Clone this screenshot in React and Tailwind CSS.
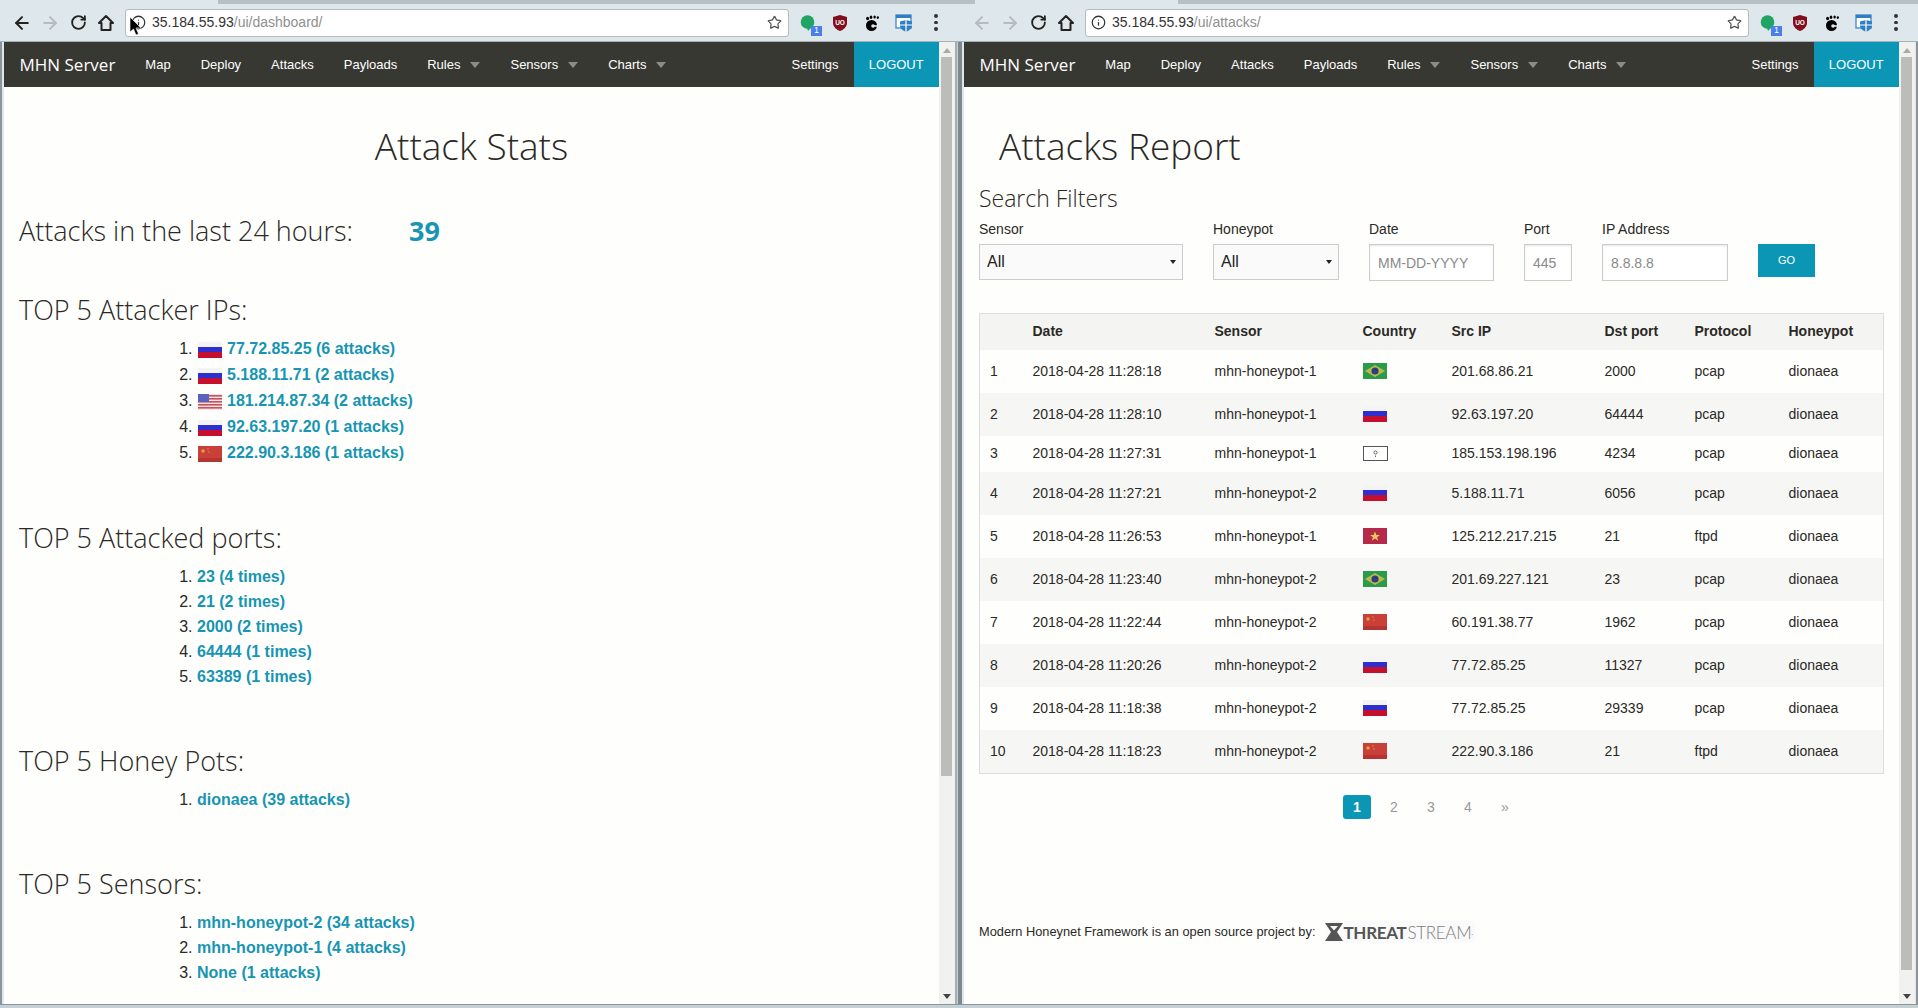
import React from 'react';
import { ArrowLeft, ArrowRight, RotateCw, Star, Info } from 'lucide-react';

const attackerIps = [
  { flag: 'ru', text: '77.72.85.25 (6 attacks)' },
  { flag: 'ru', text: '5.188.11.71 (2 attacks)' },
  { flag: 'us', text: '181.214.87.34 (2 attacks)' },
  { flag: 'ru', text: '92.63.197.20 (1 attacks)' },
  { flag: 'cn', text: '222.90.3.186 (1 attacks)' },
];
const ports = ['23 (4 times)', '21 (2 times)', '2000 (2 times)', '64444 (1 times)', '63389 (1 times)'];
const sensors = ['mhn-honeypot-2 (34 attacks)', 'mhn-honeypot-1 (4 attacks)', 'None (1 attacks)'];

const attacks = [
  { id: 1, date: '2018-04-28 11:28:18', sensor: 'mhn-honeypot-1', flag: 'br', ip: '201.68.86.21', port: '2000', proto: 'pcap' },
  { id: 2, date: '2018-04-28 11:28:10', sensor: 'mhn-honeypot-1', flag: 'ru', ip: '92.63.197.20', port: '64444', proto: 'pcap' },
  { id: 3, date: '2018-04-28 11:27:31', sensor: 'mhn-honeypot-1', flag: 'xx', ip: '185.153.198.196', port: '4234', proto: 'pcap' },
  { id: 4, date: '2018-04-28 11:27:21', sensor: 'mhn-honeypot-2', flag: 'ru', ip: '5.188.11.71', port: '6056', proto: 'pcap' },
  { id: 5, date: '2018-04-28 11:26:53', sensor: 'mhn-honeypot-1', flag: 'vn', ip: '125.212.217.215', port: '21', proto: 'ftpd' },
  { id: 6, date: '2018-04-28 11:23:40', sensor: 'mhn-honeypot-2', flag: 'br', ip: '201.69.227.121', port: '23', proto: 'pcap' },
  { id: 7, date: '2018-04-28 11:22:44', sensor: 'mhn-honeypot-2', flag: 'cn', ip: '60.191.38.77', port: '1962', proto: 'pcap' },
  { id: 8, date: '2018-04-28 11:20:26', sensor: 'mhn-honeypot-2', flag: 'ru', ip: '77.72.85.25', port: '11327', proto: 'pcap' },
  { id: 9, date: '2018-04-28 11:18:38', sensor: 'mhn-honeypot-2', flag: 'ru', ip: '77.72.85.25', port: '29339', proto: 'pcap' },
  { id: 10, date: '2018-04-28 11:18:23', sensor: 'mhn-honeypot-2', flag: 'cn', ip: '222.90.3.186', port: '21', proto: 'ftpd' },
];

const Flag = ({ code, className = 'block' }) => {
  if (code === 'xx') {
    return (
      <svg width="25" height="15" viewBox="0 0 25 15" className={className}>
        <rect x="0.5" y="0.5" width="24" height="14" fill="#fff" stroke="#555" />
        <circle cx="12.5" cy="6.5" r="1.6" fill="none" stroke="#666" />
        <rect x="12" y="9.5" width="1" height="1.5" fill="#666" />
      </svg>
    );
  }
  return (
    <svg width="24" height="16" viewBox="0 0 24 16" className={className}>
      {code === 'ru' && (
        <>
          <rect width="24" height="6" fill="#f4f4f4" />
          <rect y="5" width="24" height="6" fill="#2d2fd0" />
          <rect y="10" width="24" height="6" fill="#c4102c" />
        </>
      )}
      {code === 'us' && (
        <>
          <rect width="24" height="16" fill="#f3e3e3" />
          {[1, 4, 7, 10, 13].map((y) => (
            <rect key={y} y={y} width="24" height="1.6" fill="#c4525f" />
          ))}
          <rect width="11" height="8" fill="#5a62bd" />
        </>
      )}
      {code === 'cn' && (
        <>
          <rect width="24" height="16" fill="#c9403a" />
          <rect y="12" width="24" height="4" fill="#b5342f" />
          <circle cx="5" cy="5" r="1.8" fill="#d9a03c" />
          <circle cx="10" cy="3" r="0.7" fill="#d9a03c" />
          <circle cx="11" cy="6" r="0.7" fill="#d9a03c" />
        </>
      )}
      {code === 'br' && (
        <>
          <rect width="24" height="16" fill="#2b9a4b" />
          <polygon points="12,2 22,8 12,14 2,8" fill="#b9bb4a" />
          <circle cx="12" cy="8" r="3.6" fill="#2b3f7e" />
        </>
      )}
      {code === 'vn' && (
        <>
          <rect width="24" height="16" fill="#b52a48" />
          <polygon points="12,3.5 13.4,7 17,7 14.1,9.2 15.2,12.7 12,10.6 8.8,12.7 9.9,9.2 7,7 10.6,7" fill="#e8c75a" />
        </>
      )}
    </svg>
  );
};

const Caret = () => <span className="ml-[10px] h-0 w-0 border-x-[5px] border-t-[6px] border-x-transparent border-t-[#8c8c88]" />;

const NavBar = () => (
  <div className="flex h-[45px] items-center bg-[#383833] text-[13px] text-white">
    <span className="ml-[15.5px] mr-[30px] font-['Open_Sans',sans-serif] text-[17px]">MHN Server</span>
    <div className="flex items-center gap-[30px]">
      <span>Map</span>
      <span>Deploy</span>
      <span>Attacks</span>
      <span>Payloads</span>
      <span className="flex items-center">Rules<Caret /></span>
      <span className="flex items-center">Sensors<Caret /></span>
      <span className="flex items-center">Charts<Caret /></span>
    </div>
    <span className="ml-auto mr-[15px]">Settings</span>
    <span className="flex h-full w-[85.5px] items-center justify-center bg-[#0b96b5]">LOGOUT</span>
  </div>
);

const Scrollbar = ({ thumb }) => (
  <div className="relative flex w-[16px] flex-col bg-[#f1f1ef]">
    <div className="mx-auto mt-[6px] h-0 w-0 border-x-[4px] border-b-[5px] border-x-transparent border-b-[#a9aaa6]" />
    <div className={`ml-[2px] mt-[4px] w-[11px] bg-[#bcbdb8] ${thumb}`} />
    <div className="mx-auto mb-[5px] mt-auto h-0 w-0 border-x-[4px] border-t-[5px] border-x-transparent border-t-[#444]" />
  </div>
);

const HomeIcon = () => (
  <svg width="18" height="18" viewBox="0 0 18 18" fill="none" stroke="#222" strokeWidth="2">
    <path d="M9 2 L16 9 H13.5 V16 H4.5 V9 H2 Z" strokeLinejoin="round" />
  </svg>
);

const Extensions = () => (
  <>
    <div className="relative flex w-[32px] justify-center">
      <svg width="16" height="18" viewBox="0 0 16 18" className="mt-[2px]">
        <circle cx="7.5" cy="7" r="6.8" fill="#1fa463" />
        <polygon points="7,13 12,12 8,16" fill="#1fa463" />
      </svg>
      <span className="absolute left-[19px] top-[13px] flex h-[10px] w-[11px] items-center justify-center bg-[#4a80e8] text-[9px] leading-none text-white">1</span>
    </div>
    <div className="flex w-[32px] justify-center">
      <svg width="16" height="18" viewBox="0 0 16 18">
        <path d="M8 1 L15 3 V9 C15 13 11 16 8 17 C5 16 1 13 1 9 V3 Z" fill="#800e1c" />
        <text x="8" y="11" textAnchor="middle" fontSize="6.5" fontWeight="700" fill="#fff" fontFamily="Liberation Sans">UO</text>
      </svg>
    </div>
    <div className="flex w-[32px] justify-center">
      <svg width="15" height="18" viewBox="0 0 15 18" fill="#000">
        <ellipse cx="6.5" cy="11.5" rx="5.5" ry="5.5" />
        <circle cx="8" cy="12" r="1.8" fill="#dee7ec" />
        <rect x="8" y="11.2" width="5" height="1.6" fill="#dee7ec" />
        <ellipse cx="2.6" cy="4.5" rx="1.5" ry="1.8" />
        <ellipse cx="6" cy="3.2" rx="1.3" ry="1.7" />
        <ellipse cx="9.6" cy="3" rx="1.2" ry="1.6" />
        <ellipse cx="12.8" cy="3.6" rx="1.1" ry="1.3" />
      </svg>
    </div>
    <div className="flex w-[32px] justify-center">
      <svg width="18" height="18" viewBox="0 0 18 18">
        <rect x="1" y="1" width="15" height="13" fill="#fff" stroke="#2f7fc4" strokeWidth="1.2" />
        <rect x="1" y="1" width="15" height="3" fill="#2f7fc4" />
        <path d="M11 6 L17 7.5 V12 C17 15 13 17 11 18 C9 17 5 15 5 12 V7.5 Z" fill="#2f7fc4" />
        <path d="M11 6 V18 M5 11 H17" stroke="#fff" strokeWidth="1.2" />
      </svg>
    </div>
    <div className="flex w-[32px] flex-col items-center gap-[3px]">
      <span className="h-[3.5px] w-[3.5px] rounded-full bg-[#333]" />
      <span className="h-[3.5px] w-[3.5px] rounded-full bg-[#333]" />
      <span className="h-[3.5px] w-[3.5px] rounded-full bg-[#333]" />
    </div>
  </>
);

const Window = ({ host, path, tab, backColor, secure, thumb, edge, leftEdge, width, children }) => (
  <div className={`flex h-[1008px] shrink-0 flex-col ${width}`}>
    <div className="flex h-[4px] bg-[#b7c1c5]">
      <div className={`h-full bg-[#dee7ec] ${tab}`} />
    </div>
    <div className="relative flex h-[38px] items-center border-b border-[#a7b0b4] bg-[#dee7ec] pl-[8px]">
      <div className="flex w-[28px] justify-center"><ArrowLeft size={20} strokeWidth={2.4} color={backColor} /></div>
      <div className="flex w-[28px] justify-center"><ArrowRight size={20} strokeWidth={2.4} color="#b4bcc0" /></div>
      <div className="flex w-[28px] justify-center"><RotateCw size={17} strokeWidth={2.6} color="#222" /></div>
      <div className="flex w-[28px] justify-center"><HomeIcon /></div>
      <div className="ml-[5px] mr-[3px] flex h-[28px] w-[664px] items-center rounded-[3px] border border-[#b4bcc0] bg-white pl-[5px] pr-[6px] text-[14px]">
        <Info size={15} color="#333" />
        <span className="ml-[6px] text-[#333]">{host}</span>
        <span className="text-[#8f8f8f]">{path}</span>
        <Star size={15} color="#555" className="ml-auto" />
      </div>
      <Extensions />
      {secure}
    </div>
    <div className="flex h-[962px]">
      <div className={leftEdge} />
      <div className="w-[935px] overflow-hidden bg-[#fefefc] text-[#2b2925]">
        <NavBar />
        {children}
      </div>
      <Scrollbar thumb={thumb} />
      <div className={edge} />
    </div>
    <div className="h-[4px] border-t border-[#8c969a] bg-[#c5d0d5]" />
  </div>
);

const SectionHeading = ({ className, children }) => (
  <h2 className={`h-[36px] font-['Open_Sans',sans-serif] text-[27px] font-light leading-[36px] ${className}`}>{children}</h2>
);

const LinkList = ({ items, className }) => (
  <ol className={`list-decimal pl-[178px] text-[16px] ${className}`}>
    {items.map((item) => (
      <li key={item} className="h-[25px] leading-[25px]">
        <span className="font-bold text-[#1795b2]">{item}</span>
      </li>
    ))}
  </ol>
);

const Dashboard = () => (
  <div className="pl-[15px]">
    <h1 className="mt-[34px] pr-[15px] text-center font-['Open_Sans',sans-serif] text-[37px] font-light leading-[50px]">Attack Stats</h1>
    <div className="mt-[42px] flex h-[36px] items-center font-['Open_Sans',sans-serif]">
      <span className="text-[27px] font-light">Attacks in the last 24 hours:</span>
      <span className="ml-[56px] text-[27px] font-bold text-[#1795b2]">39</span>
    </div>
    <SectionHeading className="mt-[43px]">TOP 5 Attacker IPs:</SectionHeading>
    <ol className="mt-[8px] list-decimal pl-[178px] text-[16px]">
      {attackerIps.map((row) => (
        <li key={row.text} className="h-[26px] leading-[26px]">
          <Flag code={row.flag} className="ml-[1px] mr-[5px] inline-block align-[-4px]" />
          <span className="font-bold text-[#1795b2]">{row.text}</span>
        </li>
      ))}
    </ol>
    <SectionHeading className="mt-[54px]">TOP 5 Attacked ports:</SectionHeading>
    <LinkList className="mt-[7.5px]" items={ports} />
    <SectionHeading className="mt-[54.5px]">TOP 5 Honey Pots:</SectionHeading>
    <LinkList className="mt-[7.5px]" items={['dionaea (39 attacks)']} />
    <SectionHeading className="mt-[54.5px]">TOP 5 Sensors:</SectionHeading>
    <LinkList className="mt-[7.5px]" items={sensors} />
  </div>
);

const Field = ({ label, className, children }) => (
  <div className={className}>
    <label className="block h-[18px] text-[14px] leading-[18px]">{label}</label>
    <div className="mt-[6px]">{children}</div>
  </div>
);

const SelectBox = () => (
  <div className="relative h-[36px]">
    <select className="h-full w-full appearance-none border border-[#cccccc] bg-[#fafafa] pl-[7px] text-[16px] text-[#222]">
      <option>All</option>
    </select>
    <span className="absolute right-[7px] top-[16px] h-0 w-0 border-x-[3px] border-t-[4px] border-x-transparent border-t-[#222]" />
  </div>
);

const TextBox = ({ placeholder }) => (
  <input
    placeholder={placeholder}
    className="h-[37px] w-full border border-[#cccccc] bg-white pl-[8px] text-[14px] shadow-[inset_0_1px_2px_rgba(0,0,0,0.1)] placeholder:text-[#8a8a8a]"
  />
);

const Report = () => (
  <div className="pl-[15px]">
    <h1 className="ml-[20px] mt-[34px] font-['Open_Sans',sans-serif] text-[37px] font-light leading-[50px]">Attacks Report</h1>
    <h2 className="mt-[12px] font-['Open_Sans',sans-serif] text-[23px] font-light leading-[30px]">Search Filters</h2>
    <div className="mt-[7px] flex gap-[30px]">
      <Field label="Sensor" className="w-[204px]"><SelectBox /></Field>
      <Field label="Honeypot" className="w-[126px]"><SelectBox /></Field>
      <Field label="Date" className="w-[125px]"><TextBox placeholder="MM-DD-YYYY" /></Field>
      <Field label="Port" className="w-[48px]"><TextBox placeholder="445" /></Field>
      <Field label="IP Address" className="w-[126px]"><TextBox placeholder="8.8.8.8" /></Field>
      <button className="mt-[24px] h-[33px] w-[57px] bg-[#0b96b5] text-[11px] text-white">GO</button>
    </div>
    <table className="mt-[32px] w-[904px] table-fixed border-collapse border border-[#dddddd] text-left text-[14px]">
      <colgroup>
        <col className="w-[41px]" />
        <col className="w-[182px]" />
        <col className="w-[148px]" />
        <col className="w-[89px]" />
        <col className="w-[153px]" />
        <col className="w-[90px]" />
        <col className="w-[94px]" />
        <col className="w-[107px]" />
      </colgroup>
      <thead>
        <tr className="h-[36px] bg-[#f4f5f3] font-bold">
          <th />
          <th className="pl-[12px]">Date</th>
          <th className="pl-[12px]">Sensor</th>
          <th className="pl-[12px]">Country</th>
          <th className="pl-[12px]">Src IP</th>
          <th className="pl-[12px]">Dst port</th>
          <th className="pl-[12px]">Protocol</th>
          <th className="pl-[12px]">Honeypot</th>
        </tr>
      </thead>
      <tbody>
        {attacks.map((row) => (
          <tr key={row.id} className={`${row.flag === 'xx' ? 'h-[36px]' : row.id === 10 ? 'h-[44px]' : 'h-[43px]'} ${row.id % 2 === 0 ? 'bg-[#f6f7f5]' : 'bg-[#fefefc]'}`}>
            <td className="pl-[10px]">{row.id}</td>
            <td className="pl-[12px]">{row.date}</td>
            <td className="pl-[12px]">{row.sensor}</td>
            <td className="pl-[12.5px]"><Flag code={row.flag} /></td>
            <td className="pl-[12px]">{row.ip}</td>
            <td className="pl-[12px]">{row.port}</td>
            <td className="pl-[12px]">{row.proto}</td>
            <td className="pl-[12px]">dionaea</td>
          </tr>
        ))}
      </tbody>
    </table>
    <div className="ml-[364px] mt-[21px] flex gap-[9px] text-[14px] text-[#999]">
      <span className="flex h-[24px] w-[28px] items-center justify-center rounded-[3px] bg-[#0b96b5] font-bold text-white">1</span>
      <span className="flex h-[24px] w-[28px] items-center justify-center">2</span>
      <span className="flex h-[24px] w-[28px] items-center justify-center">3</span>
      <span className="flex h-[24px] w-[28px] items-center justify-center">4</span>
      <span className="flex h-[24px] w-[28px] items-center justify-center">»</span>
    </div>
    <div className="mt-[102px] flex h-[22px] items-center text-[12.8px]">
      <span>Modern Honeynet Framework is an open source project by:</span>
      <div className="ml-[10px] flex h-[22px] w-[150px] items-center bg-[#fafafa] font-['Lato',sans-serif] text-[17px] leading-none tracking-[-0.3px]">
        <svg width="18" height="18" viewBox="0 0 18 18" className="shrink-0">
          <path d="M0 0 H18 L12 9 L18 18 H0 L6 9 Z" fill="#555" />
          <path d="M5 3 H13 L9 7.5 Z" fill="#fafafa" />
        </svg>
        <span className="font-bold text-[#555]">THREAT</span>
        <span className="ml-[1px] font-light text-[#7d7d7d]">STREAM</span>
        <span className="text-[8px] text-[#888]">.</span>
      </div>
    </div>
  </div>
);

export default function App() {
  return (
    <div className="flex h-[1008px] w-[1918px] overflow-hidden bg-[#c5d0d5] font-['Liberation_Sans',Arial,sans-serif]">
      <Window
        width="w-[960px]"
        host="35.184.55.93"
        path="/ui/dashboard/"
        tab="w-[218px]"
        backColor="#222"
        thumb="h-[719px]"
        leftEdge="w-[4px] border-l-[2px] border-[#8c969a] bg-[#dee7ec]"
        edge="w-[5px] border-x-[2px] border-l-[#a5aeb2] border-r-[#7f898d] bg-[#c5d0d5]"
        secure={
          <svg width="12" height="20" viewBox="0 0 12 20" className="absolute left-[130px] top-[13px]">
            <path d="M0 0 L0 15 L3.5 12 L6 18 L8.5 17 L6 11 L11 11 Z" fill="#000" stroke="#fff" strokeWidth="0.6" />
          </svg>
        }
      >
        <Dashboard />
      </Window>
      <Window
        width="w-[958px]"
        host="35.184.55.93"
        path="/ui/attacks/"
        tab="ml-[15px] w-[203px]"
        backColor="#b4bcc0"
        thumb="h-[913px]"
        leftEdge="w-[4px] border-l-[2px] border-[#7f898d] bg-[#dee7ec]"
        edge="w-[3px] border-r-[2px] border-[#8c969a] bg-[#dee7ec]"
      >
        <Report />
      </Window>
    </div>
  );
}
